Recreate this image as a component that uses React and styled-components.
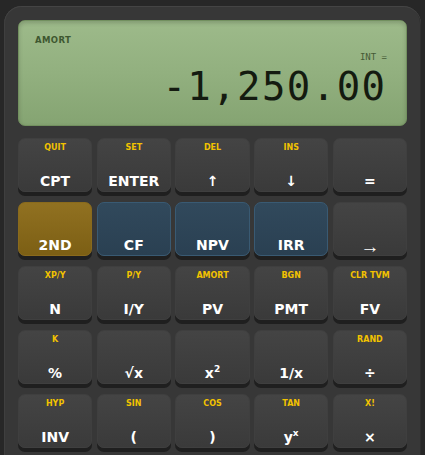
import React from 'react';
import styled, { createGlobalStyle } from 'styled-components';

const GlobalStyle = createGlobalStyle`
  html, body {
    margin: 0;
    padding: 0;
    background: #272727;
    font-family: 'DejaVu Sans', 'Liberation Sans', sans-serif;
  }
`;

const Page = styled.div`
  padding: 6px 4px 0 4px;
  height: 455px;
  overflow: hidden;
  box-sizing: border-box;
`;

const Body = styled.div`
  background: #373737;
  border-radius: 18px 18px 0 0;
  box-shadow: inset 0 1px 0 #444, inset 1px 0 0 #3f3f3f, inset -1px 0 0 #2e2e2e;
  padding: 14px 14px 20px;
  width: 417px;
  box-sizing: border-box;
`;

const Display = styled.div`
  height: 106px;
  box-sizing: border-box;
  border-radius: 7px;
  border: 1px solid #72905f;
  background: linear-gradient(180deg, #9dba8a 0%, #92b07f 50%, #85a472 100%);
  box-shadow: inset 0 2px 4px rgba(0, 0, 0, 0.18);
  padding: 13px 21px 0 16px;
  display: flex;
  flex-direction: column;
`;

const Mode = styled.div`
  font-family: 'DejaVu Sans', sans-serif;
  font-weight: bold;
  font-size: 8.5px;
  letter-spacing: 0.4px;
  color: #3e5730;
  line-height: 12px;
`;

const Indicator = styled.div`
  align-self: flex-end;
  font-family: 'DejaVu Sans Mono', monospace;
  font-size: 9px;
  color: #455a36;
  line-height: 12px;
  margin-top: 5px;
  margin-right: -2px;
`;

const Readout = styled.div`
  align-self: flex-end;
  font-family: 'DejaVu Sans Mono', monospace;
  font-size: 39px;
  letter-spacing: 1.4px;
  line-height: 40px;
  color: #141b10;
  margin-top: 4px;
  margin-right: -1.4px;
`;

const Keypad = styled.div`
  display: grid;
  grid-template-columns: repeat(5, 1fr);
  column-gap: 4.5px;
  row-gap: 10px;
  margin-top: 12px;
`;

const tones = {
  plain: { top: '#444444', bottom: '#3a3a3a', edge: '#3f3f3f' },
  second: { top: '#917121', bottom: '#7c5f14', edge: '#8a6a1c' },
  cash: { top: '#31495c', bottom: '#2a4052', edge: '#395a73' },
};

const Key = styled.button`
  height: 54px;
  border-radius: 7px;
  border: 1px solid ${(p) => tones[p.$tone].edge};
  background: linear-gradient(180deg, ${(p) => tones[p.$tone].top}, ${(p) => tones[p.$tone].bottom});
  box-shadow: 0 4px 0 #1f1f1f;
  padding: 0;
  display: flex;
  flex-direction: column;
  align-items: center;
  color: #fff;
  font-family: 'DejaVu Sans', sans-serif;
`;

const Shift = styled.span`
  font-size: 8px;
  font-weight: bold;
  color: #f2c200;
  line-height: 10px;
  margin-top: 4px;
  height: 10px;
  white-space: nowrap;
`;

const Label = styled.span`
  font-size: 14px;
  font-weight: bold;
  line-height: 16px;
  margin-top: 20px;
  white-space: nowrap;

  sup {
    font-size: 9px;
    line-height: 0;
    vertical-align: 6px;
  }
`;

const Arrow = styled.span`
  font-family: 'Liberation Sans', sans-serif;
  font-size: 19px;
  line-height: 16px;
  margin-top: 22px;
`;

const keys = [
  { shift: 'QUIT', label: 'CPT' },
  { shift: 'SET', label: 'ENTER' },
  { shift: 'DEL', label: '↑' },
  { shift: 'INS', label: '↓' },
  { shift: '', label: '=' },
  { shift: '', label: '2ND', tone: 'second' },
  { shift: '', label: 'CF', tone: 'cash' },
  { shift: '', label: 'NPV', tone: 'cash' },
  { shift: '', label: 'IRR', tone: 'cash' },
  { shift: '', label: '→', arrow: true },
  { shift: 'XP/Y', label: 'N' },
  { shift: 'P/Y', label: 'I/Y' },
  { shift: 'AMORT', label: 'PV' },
  { shift: 'BGN', label: 'PMT' },
  { shift: 'CLR TVM', label: 'FV' },
  { shift: 'K', label: '%' },
  { shift: '', label: '√x' },
  { shift: '', label: <>x<sup>2</sup></> },
  { shift: '', label: '1/x' },
  { shift: 'RAND', label: '÷' },
  { shift: 'HYP', label: 'INV' },
  { shift: 'SIN', label: '(' },
  { shift: 'COS', label: ')' },
  { shift: 'TAN', label: <>y<sup>x</sup></> },
  { shift: 'X!', label: '×' },
];

export default function App() {
  return (
    <Page>
      <GlobalStyle />
      <Body>
        <Display>
          <Mode>AMORT</Mode>
          <Indicator>INT =</Indicator>
          <Readout>-1,250.00</Readout>
        </Display>
        <Keypad>
          {keys.map((k, i) => (
            <Key key={i} $tone={k.tone || 'plain'}>
              <Shift>{k.shift}</Shift>
              {k.arrow ? <Arrow>{k.label}</Arrow> : <Label>{k.label}</Label>}
            </Key>
          ))}
        </Keypad>
      </Body>
    </Page>
  );
}
